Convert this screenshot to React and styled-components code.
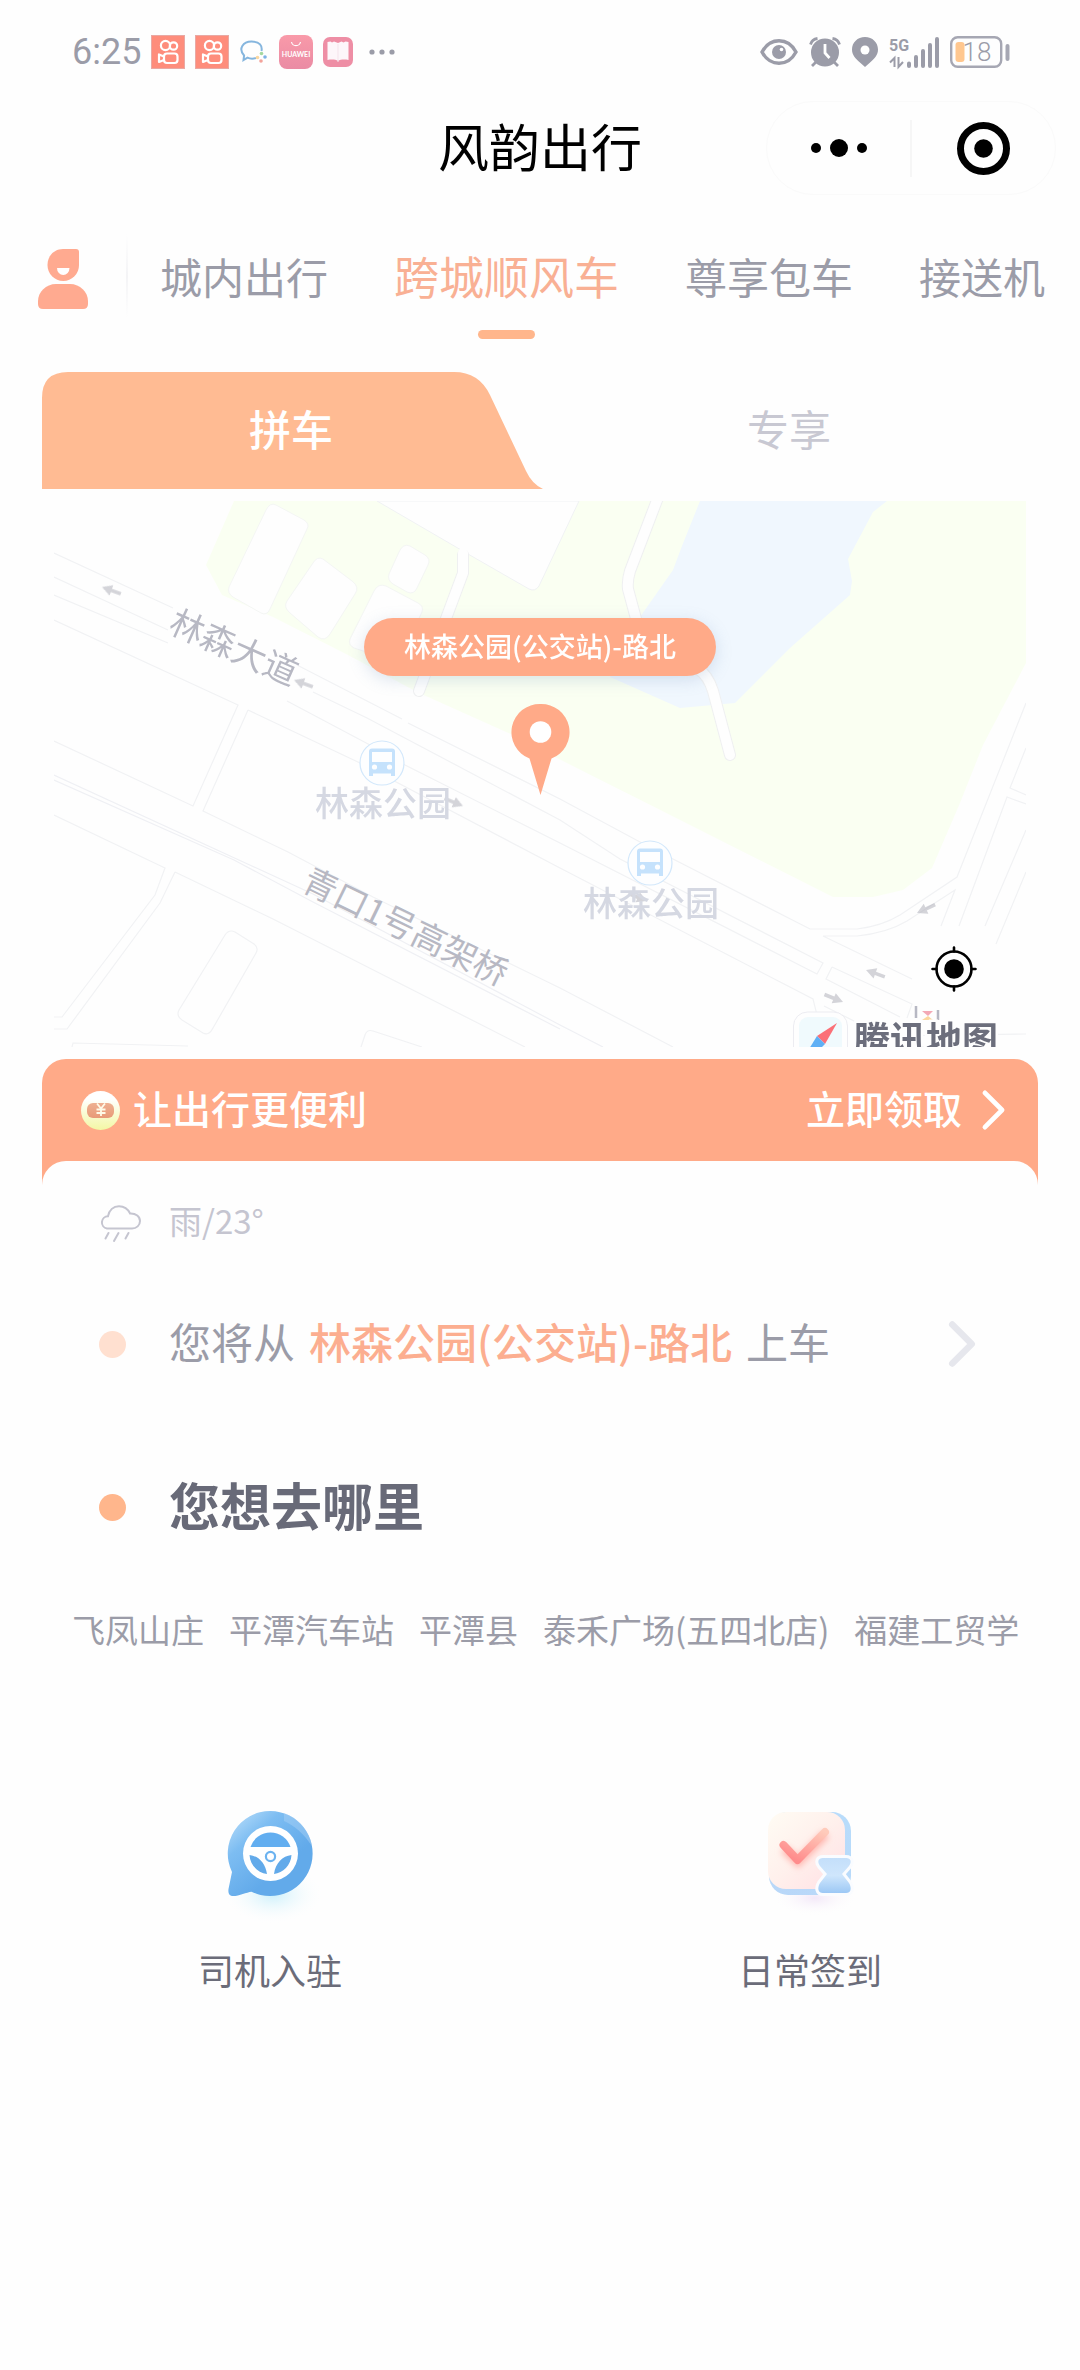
import React, { useState } from 'react';
import styled, { createGlobalStyle } from 'styled-components';

const GlobalStyle = createGlobalStyle`
  * {
    box-sizing: border-box;
  }
  body {
    margin: 0;
    background: #fefefe;
    color: #9b9ca8;
    font-family: 'Noto Sans CJK SC', 'Noto Sans', sans-serif;
  }
  button {
    margin: 0;
    padding: 0;
    border: 0;
    background: transparent;
    color: inherit;
    font: inherit;
    white-space: nowrap;
    cursor: pointer;
  }
  svg {
    display: block;
    flex: none;
    overflow: visible;
  }
`;

const PageUI = styled.div`
  display: flex;
  flex-direction: column;
  min-height: 100vh;
  overflow: hidden;
`;

const StatusBarUI = styled.div`
  display: flex;
  align-items: center;
  justify-content: space-between;
  height: 104px;
  padding: 0 70px 0 72px;
`;

const StatusGroupUI = styled.div`
  display: flex;
  align-items: center;
  gap: ${({ gap }) => gap}px;
`;

const ClockUI = styled.span`
  font-family: Roboto, sans-serif;
  font-size: 36px;
  line-height: 40px;
`;

const HeaderUI = styled.header`
  display: grid;
  grid-template-columns: 1fr auto 1fr;
  grid-template-rows: 88px;
  align-items: center;
  padding: 0 24px;
`;

const TitleUI = styled.h1`
  grid-column: 2;
  margin: 0;
  padding-bottom: 6px;
  color: #000;
  font-size: 51px;
  font-weight: 400;
  line-height: 60px;
`;

const CapsuleUI = styled.div`
  display: flex;
  align-items: center;
  justify-self: end;
  width: 290px;
  height: 94px;
  border: 1px solid #fafafa;
  border-radius: 47px;
  button {
    display: flex;
    flex: 1;
    justify-content: center;
  }
  button + button {
    border-left: 2px solid #f6f6f6;
    padding: 2px 0;
  }
`;

const NavUI = styled.nav`
  display: flex;
  align-items: flex-start;
  padding: 36px 0 33px 38px;
`;

const ProfileUI = styled.button`
  display: flex;
  align-items: center;
  height: 102px;
  padding-right: 38px;
`;

const NavDividerUI = styled.div`
  width: 2px;
  height: 84px;
  margin: 6px 32px 0 0;
  background: linear-gradient(#fefefe, #f4f4f6, #fefefe);
`;

const NavListUI = styled.div`
  display: flex;
  gap: 66px;
`;

const NavTabUI = styled.button`
  display: flex;
  flex-direction: column;
  align-items: center;
  gap: 6px;
  font-size: ${({ $active }) => ($active ? 45 : 42)}px;
  line-height: 96px;
  color: ${({ $active }) => ($active ? '#f9b094' : '#9b9ca8')};
  &::after {
    content: '';
    width: 57px;
    height: 9px;
    border-radius: 5px;
    background: ${({ $active }) => ($active ? '#ffb68c' : 'transparent')};
  }
`;

const MainUI = styled.main`
  padding: 0 42px;
`;

const ModeTabsUI = styled.div`
  display: flex;
`;

const ModeTabUI = styled.button`
  position: relative;
  flex: 1;
  height: 117px;
  padding-bottom: 6px;
  font-size: 42px;
  font-weight: ${({ $active }) => ($active ? 500 : 400)};
  color: ${({ $active }) => ($active ? '#fff' : '#c8c8d2')};
  svg {
    position: absolute;
    top: 0;
    left: 0;
    width: calc(100% + 3px);
    height: 100%;
  }
  span {
    position: relative;
  }
`;

const MapUI = styled.section`
  position: relative;
  margin: 12px 12px;
  overflow: hidden;
  > svg {
    width: 100%;
    height: auto;
  }
`;

const PickupUI = styled.div`
  position: absolute;
  top: 117px;
  left: 0;
  right: 0;
  display: flex;
  flex-direction: column;
  align-items: center;
  gap: 28px;
`;

const PickupLabelUI = styled.div`
  padding: 0 40px 2px;
  border-radius: 29px;
  background: #ffaa88;
  box-shadow: 0 4px 16px rgba(120, 150, 190, 0.25);
  color: #fff;
  font-size: 27px;
  font-weight: 500;
  line-height: 56px;
  white-space: nowrap;
`;

const LocateUI = styled.button`
  position: absolute;
  right: 49px;
  bottom: 55px;
`;

const BannerUI = styled.button`
  display: flex;
  align-items: center;
  justify-content: space-between;
  width: 100%;
  height: 126px;
  padding: 0 33px 24px 39px;
  border-radius: 24px 24px 0 0;
  background: #ffaa88;
  color: #fff;
  font-size: 39px;
  font-weight: 500;
  line-height: 48px;
`;

const BannerTextUI = styled.span`
  display: flex;
  align-items: center;
  gap: ${({ gap }) => gap}px;
  span {
    padding-bottom: 6px;
  }
`;

const PanelUI = styled.section`
  margin-top: -24px;
  padding: 38px 57px 0;
  border-radius: 24px 24px 0 0;
  background: #fefefe;
`;

const RowUI = styled.div`
  display: grid;
  grid-template-columns: 70px 1fr auto;
  align-items: center;
  > span {
    padding-bottom: 6px;
  }
`;

const WeatherUI = styled(RowUI)`
  color: #c5c5d0;
  font-size: 33px;
  line-height: 42px;
`;

const PlaceUI = styled(RowUI).attrs({ as: 'button' })`
  width: 100%;
  margin-top: ${({ $top }) => $top}px;
  padding-right: 6px;
  text-align: left;
  font-size: 42px;
  line-height: 58px;
  strong {
    margin: 0 14px;
    color: #fcae90;
    font-weight: 500;
  }
`;

const DotUI = styled.i`
  width: 27px;
  height: 27px;
  border-radius: 50%;
  background: ${({ $soft }) => ($soft ? '#ffe0d0' : '#ffb68c')};
`;

const DestinationUI = styled.span`
  color: #686a78;
  font-size: 51px;
  font-weight: 700;
`;

const SuggestListUI = styled.div`
  display: flex;
  gap: 25px;
  margin: 66px 60px 0 72px;
  overflow: hidden;
  font-size: 33px;
  line-height: 48px;
`;

const ServicesUI = styled.section`
  display: grid;
  grid-template-columns: 1fr 1fr;
  margin-top: 154px;
`;

const ServiceUI = styled.button`
  display: flex;
  flex-direction: column;
  align-items: center;
  gap: 16px;
  color: #6b6c79;
  font-size: 36px;
  line-height: 48px;
`;

const KuaishouIcon = () => (
  <svg width="34" height="34" viewBox="0 0 34 34" fill="none" stroke="#fff" strokeWidth="2.2">
    <rect x=".5" y=".5" width="33" height="33" fill="#fe8d7c" stroke="#e9a9a4" strokeWidth="1" />
    <circle cx="14.5" cy="10.500" r="4.600" />
    <circle cx="22.500" cy="11" r="3.700" />
    <rect x="13" y="18.500" width="13.500" height="9.500" rx="3" />
    <path d="M13 21.500 8 19.500v7.500l5-2" strokeLinejoin="round" />
  </svg>
);

const ChatIcon = () => (
  <svg width="30" height="30" viewBox="0 0 30 30" fill="none">
    <path d="M17 21c-3 1-6 .8-8.500-.3L4.500 23l.6-4.500C-1 12 4 4.500 12.500 4.500S23.500 9 22.500 14" stroke="#86b6de" strokeWidth="2" />
    <circle cx="22.500" cy="16.500" r="1.800" fill="#a6d8a0" />
    <circle cx="26" cy="20" r="1.800" fill="#7db2e6" />
    <circle cx="22" cy="24" r="1.800" fill="#f3a39b" />
    <circle cx="18.500" cy="20.500" r="1.800" fill="#fbd7a0" />
  </svg>
);

const HuaweiIcon = () => (
  <svg width="34" height="34" viewBox="0 0 34 34">
    <defs>
      <linearGradient id="hw" x2="0" y2="1">
        <stop stopColor="#f99aa9" />
        <stop offset="1" stopColor="#ea8ba4" />
      </linearGradient>
    </defs>
    <rect width="34" height="34" rx="8" fill="url(#hw)" />
    <path d="M12.500 7a4.600 4.600 0 0 0 9 0" fill="none" stroke="#fff" strokeWidth="1.200" />
    <text x="17" y="22" textAnchor="middle" fill="#fff" fontFamily="Lato, sans-serif" fontSize="7" fontWeight="700">HUAWEI</text>
  </svg>
);

const BookIcon = () => (
  <svg width="30" height="30" viewBox="0 0 30 30">
    <rect width="30" height="30" rx="7" fill="#ee8ea5" />
    <path d="M4.500 5l3-.5 1.500 1 2-1L15 6l3.500-1.500 2 1 2-1 3 .5v18c-4-.8-8-.6-10.500.8-2.500-1.400-6.500-1.600-10.500-.8z" fill="#fdf6fa" />
    <path d="M15 7v18" stroke="#f4e3eb" />
  </svg>
);

const MoreIcon = () => (
  <svg width="32" height="6" viewBox="-6 0 32 6" fill="#9b9ca8">
    <circle cx="3" cy="3" r="2.600" />
    <circle cx="13" cy="3" r="2.600" />
    <circle cx="23" cy="3" r="2.600" />
  </svg>
);

const EyeIcon = () => (
  <svg width="38" height="26" viewBox="0 0 38 26">
    <path d="M2 13C10-2 28-2 36 13 28 28 10 28 2 13z" fill="none" stroke="#9b9ca8" strokeWidth="3.400" />
    <circle cx="19" cy="13" r="7" fill="#9b9ca8" />
    <circle cx="21.500" cy="10.500" r="1.800" fill="#fff" />
  </svg>
);

const AlarmIcon = () => (
  <svg width="32" height="30" viewBox="0 0 32 30" fill="none" stroke="#9b9ca8" strokeWidth="2.800">
    <circle cx="16" cy="15.500" r="14" fill="#9b9ca8" stroke="none" />
    <path d="M1.500 7.500C2.500 4 5 2 8.500 1.500M30.500 7.500C29.500 4 27 2 23.500 1.500M7 25l-4 4M25 25l4 4" />
    <path d="M16 7v9l4.500 5" stroke="#fff" />
  </svg>
);

const PlaceIcon = () => (
  <svg width="26" height="30" viewBox="0 0 26 30">
    <path d="M13 0c7.500 0 13 5.500 13 12.500 0 6-4 9.500-8.500 13.500L13 30l-4.500-4C4 22 0 18.500 0 12.500 0 5.500 5.500 0 13 0z" fill="#9b9ca8" />
    <circle cx="13" cy="13" r="4.500" fill="#fff" />
  </svg>
);

const SignalIcon = () => (
  <svg width="50" height="31" viewBox="0 0 50 31">
    <text x="0" y="14" fill="#9b9ca8" fontFamily="Roboto, sans-serif" fontSize="16" fontWeight="700">5G</text>
    <path d="M5.500 30V21L1 25.500M9.500 20v10l4.500-5" fill="none" stroke="#9b9ca8" strokeWidth="2" />
    <path d="M20 26.500v2.500M27 20v9M34 14v15M41 8v21M48 2v27" stroke="#9b9ca8" strokeWidth="4" strokeLinecap="round" />
  </svg>
);

const BatteryIcon = () => (
  <svg width="60" height="32" viewBox="0 0 60 32">
    <rect x="1.200" y="1.200" width="50" height="29.500" rx="6.500" fill="none" stroke="#a6a7b3" strokeWidth="2.400" />
    <rect x="5.500" y="6" width="9" height="20" rx="3" fill="#ffc78f" />
    <rect x="55.500" y="8" width="4" height="17" rx="2" fill="#a6a7b3" />
    <text x="27" y="25" textAnchor="middle" fill="#9b9ca8" fontFamily="Roboto, sans-serif" fontSize="26" fontWeight="300">18</text>
  </svg>
);

const ProfileIcon = () => (
  <svg width="50" height="60" viewBox="0 0 50 60">
    <path d="M25 0h13q3 0 3 3v13a15.700 16 0 0 1-31.500 0C9.500 7 16 0 25 0z" fill="#ffaa90" />
    <path d="M19 19h12.500a6.250 7 0 0 1-12.500 0z" fill="#fff" />
    <path d="M18 35h14c10 0 18 8 18 17v3q0 5-5 5H5q-5 0-5-5v-3c0-9 8-17 18-17z" fill="#ffaa90" />
  </svg>
);

const ChevronIcon = ({ width, height, color, stroke }) => (
  <svg width={width} height={height} viewBox="0 0 24 42" fill="none" stroke={color} strokeWidth={stroke} strokeLinecap="round" strokeLinejoin="round">
    <path d="m3 3 18 18L3 39" />
  </svg>
);

const CouponIcon = () => (
  <svg width="39" height="39" viewBox="0 0 39 39">
    <defs>
      <linearGradient id="coin" x2="0" y2="1">
        <stop offset=".2" stopColor="#fff" />
        <stop offset="1" stopColor="#f3f7a4" />
      </linearGradient>
      <linearGradient id="slot" x2="0" y2="1">
        <stop stopColor="#eeb090" />
        <stop offset="1" stopColor="#e89a78" />
      </linearGradient>
    </defs>
    <circle cx="19.500" cy="19.500" r="19.500" fill="url(#coin)" />
    <rect x="6" y="12" width="27" height="15" rx="6" fill="url(#slot)" />
    <path d="m16 12.500 4 5 4-5M20 17.500V25M15.500 18.500h9M15.500 22h9" fill="none" stroke="#fffbe8" strokeWidth="1.800" />
  </svg>
);

const RainIcon = () => (
  <svg width="42" height="37" viewBox="0 0 42 37" fill="none" stroke="#c5c5d0" strokeWidth="2" strokeLinecap="round">
    <path d="M8 23.500a6.200 6.200 0 0 1 1-12.300C10 5 14.500 1.200 20 1.200c5 0 9 2.800 11 7.200 6-.3 10 3.300 10 7.600s-3.500 7.500-8 7.500z" />
    <path d="m9.500 28-3 5.500M19.500 28 15 36M29.500 28l-3 5.500" />
  </svg>
);

const DriverIcon = () => (
  <svg width="100" height="122" viewBox="60 25 100 122">
    <defs>
      <linearGradient id="drop" x1="0" y1="0" x2=".6" y2=".7">
        <stop stopColor="#c3e3fb" />
        <stop offset=".45" stopColor="#7dbdf2" />
        <stop offset="1" stopColor="#62aaea" />
      </linearGradient>
      <radialGradient id="glow">
        <stop stopColor="#cbf0fb" />
        <stop offset="1" stopColor="#fefefe" stopOpacity="0" />
      </radialGradient>
    </defs>
    <ellipse cx="113" cy="112" rx="50" ry="30" fill="url(#glow)" />
    <path d="M110.500 29a42.500 42.500 0 1 1-19 80.700c-5 .5-12 4.300-18.500 4.300-4 0-5-3-4.500-7l3.500-17A42.500 42.500 0 0 1 110.500 29z" fill="url(#drop)" />
    <path d="M124 31a42.500 42.500 0 0 1 28 33c-9-13-17-20-28-25z" fill="#b5d8f8" opacity=".4" />
    <circle cx="110.500" cy="71.500" r="27.500" fill="#fff" />
    <path d="M90.500 65a21 21 0 0 1 40 0z" fill="#62aef0" />
    <path d="M89.500 73c9 1 16 8 17.500 19-9-1-17-9-17.500-19zM131.500 73c-9 1-16 8-17.500 19 9-1 17-9 17.500-19z" fill="#62aaea" />
    <circle cx="110.500" cy="74.500" r="4.600" fill="#fff" stroke="#6cb3f0" strokeWidth="2.200" />
  </svg>
);

const CheckInIcon = () => (
  <svg width="100" height="122" viewBox="61 25 100 122">
    <defs>
      <linearGradient id="card" x2="1" y2="1">
        <stop stopColor="#fffcf4" />
        <stop offset=".5" stopColor="#fff0ec" />
        <stop offset="1" stopColor="#ffdfe4" />
      </linearGradient>
      <linearGradient id="back" x1="1" y1="0" x2="0" y2="1">
        <stop stopColor="#b8dcfb" />
        <stop offset="1" stopColor="#b9d7f8" />
      </linearGradient>
      <linearGradient id="tick" x1="1" y1="0" x2=".3" y2="1">
        <stop stopColor="#ffcbbb" />
        <stop offset="1" stopColor="#ff8c8c" />
      </linearGradient>
      <linearGradient id="glass" x2="0" y2="1">
        <stop stopColor="#c4dffa" />
        <stop offset=".5" stopColor="#cfe6fc" />
        <stop offset="1" stopColor="#9cc8f5" />
      </linearGradient>
      <radialGradient id="haze">
        <stop stopColor="#f3e8f8" />
        <stop offset="1" stopColor="#fefefe" stopOpacity="0" />
      </radialGradient>
      <filter id="soft" x="-50%" y="-50%" width="200%" height="200%">
        <feGaussianBlur stdDeviation="3" />
      </filter>
    </defs>
    <ellipse cx="116" cy="116" rx="42" ry="18" fill="url(#haze)" />
    <rect x="70" y="30" width="82" height="83" rx="19" fill="url(#back)" />
    <rect x="69" y="30" width="77" height="77" rx="18" fill="url(#card)" />
    <path d="m85 67 14 13 28-28" fill="none" stroke="#ffb5ae" strokeWidth="9" filter="url(#soft)" />
    <path d="m84.500 63 14 15L126 50" fill="none" stroke="url(#tick)" strokeWidth="8" strokeLinecap="round" strokeLinejoin="round" />
    <path d="M124 76h23c5 0 6 4 3 8l-7 8 7 9c3 5 2 10-3 10h-23c-5 0-6-5-3-10l7-9-7-8c-3-4-2-8 3-8z" fill="url(#glass)" stroke="#fafcff" strokeWidth="6" paintOrder="stroke" />
  </svg>
);

// [tip x, tip y, direction in degrees]
const arrows = [
  [48, 86, 200],
  [240, 179, 200],
  [409, 305, 22],
  [593, 400, 22],
  [863, 412, 155],
  [812, 469, 200],
  [789, 501, 22],
];

const BusStop = ({ x, y, name }) => (
  <g transform={`translate(${x} ${y})`}>
    <circle r="22" fill="#fdfeff" stroke="#d3e8fb" strokeWidth="1.200" />
    <path d="M-10-14.500h20q3 0 3 3V13H9v-2.500H-9V13h-4v-24.500q0-3 3-3z" fill="#c5e2fc" />
    <rect x="-10" y="-11" width="20" height="10" fill="#fdfeff" />
    <circle cx="-7.500" cy="4" r="2.600" fill="#fdfeff" />
    <circle cx="7.500" cy="4" r="2.600" fill="#fdfeff" />
    <text x="1" y="53" textAnchor="middle" fill="#d5d8e2" fontSize="34" fontWeight="500">{name}</text>
  </g>
);

const MapDrawing = () => (
  <svg viewBox="0 0 972 546">
    <path d="M180 0 152 64l16 30 51 22 75 38 69 37 96 43 42 22 278 140h40l30-7 29-22 28-65 23-58 43-82V0z" fill="#fafff2" />
    <path d="M323 0l91 53 61 35q6 3 10-3L525 0z" fill="#fefefe" stroke="#f0f2f4" />
    <path d="M646 0l-18 45-9 24-33 47-30 60 70 31 55-5 55-55 60-53 2-14-4-22 25-47 14-11z" fill="#f0f7fe" />
    <g fill="none" strokeLinecap="round" strokeLinejoin="round">
      <path d="M605-6l-29 76q-3 10-2 18l14 52 56 28q10 6 15 22l17 64" stroke="#eff0f1" strokeWidth="12" />
      <path d="M605-6l-29 76q-3 10-2 18l14 52 56 28q10 6 15 22l17 64" stroke="#fefefe" strokeWidth="10" />
      <path d="M409 54v18l-44 118" stroke="#eff0f1" strokeWidth="12" />
      <path d="M409 52v20l-44 118" stroke="#fefefe" strokeWidth="10" />
    </g>
    <g fill="#fefefe" stroke="#f4f6f4" strokeLinejoin="round">
      <path d="M222 4l28 15q6 4 3 9l-37 80q-3 7-9 4l-28-16q-6-4-4-10l37-77q4-8 10-5z" />
      <path d="M269 58l29 22q8 6 3 13l-25 40q-5 8-12 3l-28-24q-7-6-3-12l26-38q4-7 10-4z" />
      <path d="M356 45l15 9q6 4 3 10l-11 23q-3 7-10 4l-14-8q-6-4-4-10l10-22q4-9 11-6z" />
      <path d="M332 85l32 17q6 3 4 9l-21 44q-3 7-10 4l-37-12q-6-3-4-9l24-48q4-8 12-5z" />
    </g>
    <g fill="none" stroke="#f1f2f4" strokeWidth="1.200">
      <path d="M0 52l119 55M243 164l105 54M354 222l152 76 80 43 33 17 137 70h47q25-3 43-14l57-38 69-174" />
      <path d="M0 76l114 53M259 191l54 26 193 102 60 39 203 104-6 11-257-131-155-78-35-20-83-44M114 142L0 94" />
      <path d="M0 119l184 85-45 101L0 240M194 209l112 53 200 105 253 131 5 20M194 209l-45 101 85 41 85 45 187 91 113 59" />
      <path d="M0 274l259 119 247 131 43 22M0 279l180 80 79 42 247 127" stroke="#eff0f4" />
      <path d="M0 314l111 53-10 27L8 516H0M121 371l98 47 252 128M121 371l-15 31L13 528H0" />
      <path d="M181 431l19 12q5 4 2 9l-43 75q-4 8-10 5l-21-13q-6-4-3-10l46-75q4-6 10-3zM18 546l1-4 115 3M307 546l4-12q2-6 8-4l49 16" />
      <path d="M972 247l-16 40 16 7M972 303l-19-7-48 129M972 329l-41 96M972 371l-30 72M887 425l14-36-48 31q-20 12-50 15h-34l89 43M778 466l80 37-5 14M778 466l-6 12 74 38M770 505l60 30 142-2" />
    </g>
    <g fill="#9b9ca8" opacity=".42">
      {arrows.map(([x, y, deg]) => (
        <path key={`${x}-${y}`} d="M0 0l-10-5.500v3.700h-10v3.600h10v3.700z" transform={`translate(${x} ${y}) rotate(${deg})`} />
      ))}
    </g>
    <BusStop x={328} y={262} name="林森公园" />
    <BusStop x={596} y={362} name="林森公园" />
    <g fill="#b7b8c3" fontSize="34">
      <text transform="translate(113 130) rotate(24)">林森大道</text>
      <text transform="translate(246 388) rotate(26)">青口1号高架桥</text>
    </g>
    <path d="M862 505v12M884 509v10" stroke="#b7b8c3" strokeWidth="2.500" />
    <path d="M868 510h11l-5 5z" fill="#f3a9b6" />
    <path d="M868 519h11l-5-4z" fill="#fbd7a0" />
    <rect x="739.500" y="511" width="54" height="54" rx="14" fill="#fefefe" stroke="#ececf1" />
    <rect x="745" y="516" width="43" height="43" rx="9" fill="#f0fafd" />
    <path d="M783 522l-12 21-8-8z" fill="#fb7077" />
    <path d="M763 535l8 8-14 14-5-4z" fill="#5fb0f5" />
    <text x="800" y="552" fill="#6c6e7c" stroke="#fefefe" strokeWidth="5" paintOrder="stroke" fontSize="36" fontWeight="700">腾讯地图</text>
  </svg>
);

const navItems = ['城内出行', '跨城顺风车', '尊享包车', '接送机'];
const modes = ['拼车', '专享'];
const suggestions = ['飞凤山庄', '平潭汽车站', '平潭县', '泰禾广场(五四北店)', '福建工贸学'];

const App = () => {
  const [nav, setNav] = useState(1);
  const [mode, setMode] = useState(0);
  const pickup = '林森公园(公交站)-路北';

  return (
    <PageUI>
      <GlobalStyle />
      <StatusBarUI>
        <StatusGroupUI gap={10}>
          <ClockUI>6:25</ClockUI>
          <KuaishouIcon />
          <KuaishouIcon />
          <ChatIcon />
          <HuaweiIcon />
          <BookIcon />
          <MoreIcon />
        </StatusGroupUI>
        <StatusGroupUI gap={11}>
          <EyeIcon />
          <AlarmIcon />
          <PlaceIcon />
          <SignalIcon />
          <BatteryIcon />
        </StatusGroupUI>
      </StatusBarUI>

      <HeaderUI>
        <TitleUI>风韵出行</TitleUI>
        <CapsuleUI>
          <button type="button" aria-label="更多">
            <svg width="56" height="18" viewBox="0 0 56 18">
              <circle cx="5" cy="9" r="5" />
              <circle cx="28" cy="9" r="9" />
              <circle cx="51" cy="9" r="5" />
            </svg>
          </button>
          <button type="button" aria-label="关闭">
            <svg width="53" height="53" viewBox="0 0 53 53">
              <circle cx="26.500" cy="26.500" r="23" fill="none" stroke="#000" strokeWidth="7" />
              <circle cx="26.500" cy="26.500" r="9.300" />
            </svg>
          </button>
        </CapsuleUI>
      </HeaderUI>

      <NavUI>
        <ProfileUI type="button" aria-label="我的">
          <ProfileIcon />
        </ProfileUI>
        <NavDividerUI />
        <NavListUI>
          {navItems.map((item, idx) => (
            <NavTabUI key={item} type="button" $active={idx === nav} onClick={() => setNav(idx)}>
              {item}
            </NavTabUI>
          ))}
        </NavListUI>
      </NavUI>

      <MainUI>
        <ModeTabsUI>
          {modes.map((item, idx) => (
            <ModeTabUI key={item} type="button" $active={idx === mode} onClick={() => setMode(idx)}>
              {idx === mode && (
                <svg viewBox="0 0 501 117" preserveAspectRatio="none">
                  <path
                    d="M0 117V26Q0 0 26 0H412Q437 0 448 23L484 99Q490 112 501 117z"
                    fill="#ffbb93"
                    transform={idx ? 'translate(501 0) scale(-1 1)' : undefined}
                  />
                </svg>
              )}
              <span>{item}</span>
            </ModeTabUI>
          ))}
        </ModeTabsUI>

        <MapUI>
          <MapDrawing />
          <PickupUI>
            <PickupLabelUI>{pickup}</PickupLabelUI>
            <svg width="57" height="91" viewBox="0 0 57 91">
              <path d="M28.500 0a28.200 28.200 0 0 1 11 54.500L28.500 91l-11-36.500A28.200 28.200 0 0 1 28.500 0z" fill="#ffaa88" />
              <circle cx="28.500" cy="28" r="10.800" fill="#fff" />
            </svg>
          </PickupUI>
          <LocateUI type="button" aria-label="定位">
            <svg width="46" height="46" viewBox="0 0 46 46" fill="none" stroke="#000" strokeWidth="2.600" strokeLinecap="round">
              <circle cx="23" cy="23" r="17.500" />
              <circle cx="23" cy="23" r="9.800" fill="#000" stroke="none" />
              <path d="M23 1.500v4M23 40.500v4M1.500 23h4M40.500 23h4" />
            </svg>
          </LocateUI>
        </MapUI>

        <BannerUI type="button">
          <BannerTextUI gap={13}>
            <CouponIcon />
            <span>让出行更便利</span>
          </BannerTextUI>
          <BannerTextUI gap={20}>
            <span>立即领取</span>
            <ChevronIcon width={23} height={40} color="#fff" stroke={5} />
          </BannerTextUI>
        </BannerUI>

        <PanelUI>
          <WeatherUI>
            <RainIcon />
            <span>雨/23°</span>
          </WeatherUI>
          <PlaceUI type="button" $top={65}>
            <DotUI $soft />
            <span>
              您将从
              <strong>{pickup}</strong>
              上车
            </span>
            <ChevronIcon width={26} height={46} color="#e6e7ed" stroke={6} />
          </PlaceUI>
          <PlaceUI type="button" $top={99}>
            <DotUI />
            <DestinationUI>您想去哪里</DestinationUI>
          </PlaceUI>
        </PanelUI>
      </MainUI>

      <SuggestListUI>
        {suggestions.map((item) => (
          <button key={item} type="button">{item}</button>
        ))}
      </SuggestListUI>

      <ServicesUI>
        <ServiceUI type="button">
          <DriverIcon />
          司机入驻
        </ServiceUI>
        <ServiceUI type="button">
          <CheckInIcon />
          日常签到
        </ServiceUI>
      </ServicesUI>
    </PageUI>
  );
};

export default App;
